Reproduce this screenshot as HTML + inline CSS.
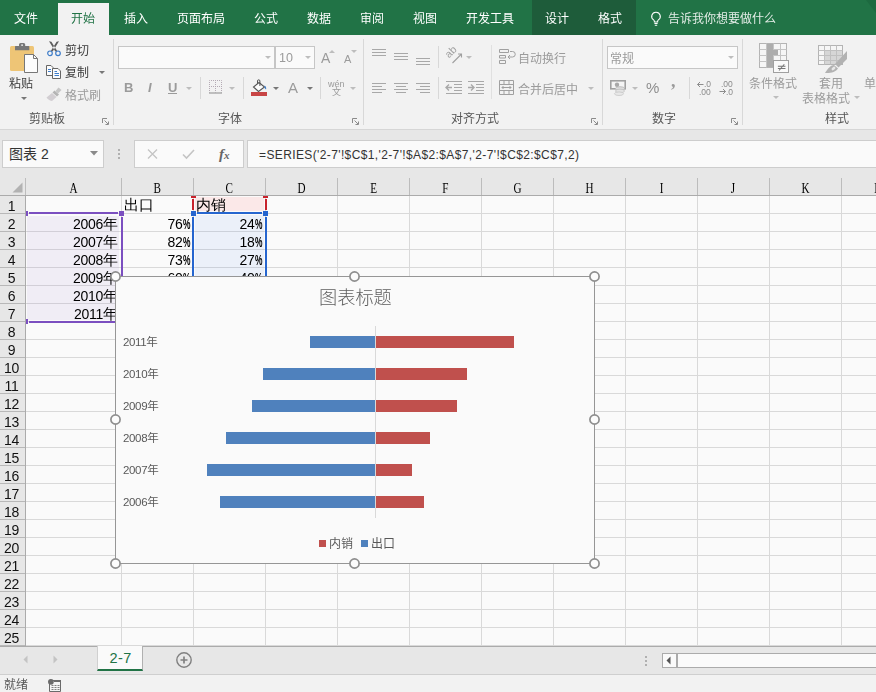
<!DOCTYPE html>
<html lang="zh-CN">
<head>
<meta charset="utf-8">
<title>Excel - 2-7</title>
<style>
*{box-sizing:border-box;margin:0;padding:0}
html,body{width:876px;height:692px;overflow:hidden;background:#fafafa}
body{font-family:"Liberation Sans","Noto Sans CJK SC",sans-serif;font-size:12px;color:#444;position:relative}
.t{position:absolute;white-space:nowrap;line-height:12px;height:12px;font-size:12px;margin-top:1px}
svg{position:absolute;overflow:visible}
#tabs,#ribbon,#grid,#status{will-change:transform}
#tabs{position:absolute;left:0;top:0;width:876px;height:35px;background:#217346}
#tabs .t{color:#fff;top:12px}
#ctx{position:absolute;left:532px;top:0;width:104px;height:35px;background:#1e5c3a}
#home{position:absolute;left:58px;top:3px;width:51px;height:32px;background:#f2f2f2}
#ribbon{position:absolute;left:0;top:35px;width:876px;height:95px;background:#f2f2f2;border-bottom:1px solid #d6d6d6}
#ribbon .t{color:#3c3c3c}
#ribbon .g{color:#9b9b9b}
#ribbon .lbl{color:#555}
.sep{position:absolute;width:1px;background:#d8d8d8}
.box{position:absolute;background:#fafafa;border:1px solid #c6c6c6}
.ar{position:absolute;width:0;height:0;border-left:3px solid transparent;border-right:3px solid transparent;border-top:3px solid #777}
.ar.l{border-top-color:#bdbdbd}
#fbar{position:absolute;left:0;top:130px;width:876px;height:48px;background:#e7e7e7}
#grid{position:absolute;left:0;top:178px;width:876px;height:468px;background:#fafafa;overflow:hidden}
#colh{position:absolute;left:0;top:0;width:876px;height:18px;background:#e7e7e7;border-bottom:1px solid #ababab}
#rowh{position:absolute;left:0;top:18px;width:26px;height:450px;background:#e7e7e7;border-right:1px solid #ababab}
.ch{position:absolute;top:0;height:17px;width:72px;text-align:center;font-family:"Liberation Serif","Noto Serif CJK SC",serif;font-size:15.5px;line-height:20px;color:#000;border-right:1px solid #bcbcbc}
.ch b{display:inline-block;font-weight:normal;transform:scaleX(.72)}
.rh{position:absolute;left:0;width:25px;padding-right:2px;height:18px;font-family:"Liberation Sans",sans-serif;font-size:14px;letter-spacing:-0.28px;line-height:20px;color:#111;text-align:center;border-bottom:1px solid #b8b8b8}
.vl{position:absolute;top:18px;width:1px;height:450px;background:#d9d9d9}
.hl{position:absolute;left:26px;height:1px;width:850px;background:#d9d9d9}
.cell{position:absolute;height:17px;font-family:"Liberation Sans","WenQuanYi Zen Hei",sans-serif;font-size:14px;letter-spacing:-0.28px;line-height:20px;color:#000;white-space:nowrap;overflow:hidden}
.cell u{text-decoration:none;display:inline-block;width:7.5px;transform:scaleX(.6);transform-origin:0 50%;font-weight:bold;font-size:14px;letter-spacing:0}
.cell s{text-decoration:none;font-family:"WenQuanYi Zen Hei","Noto Sans CJK SC",sans-serif;font-size:15px;letter-spacing:0}
.cell.r{text-align:right}
.sc{font-family:"WenQuanYi Zen Hei","Noto Sans CJK SC",sans-serif;line-height:18px;font-size:15px;letter-spacing:0;color:#000}
#chart{position:absolute;left:115px;top:98px;width:480px;height:288px;background:#fafafa;border:1px solid #969696}
#chart .t{color:#595959;margin-top:0;font-size:11.5px}
#chart .c{letter-spacing:-0.35px}
.bar{position:absolute;height:12px}
.bb{background:#4f81bd}
.br{background:#c0504d}
.hd{position:absolute;width:11px;height:11px;border-radius:50%;border:1.6px solid #8e8e8e;background:#fcfcfc}
#sheettabs{position:absolute;left:0;top:646px;width:876px;height:28px;background:#e7e7e7;border-top:1px solid #ababab}
#status{position:absolute;left:0;top:674px;width:876px;height:18px;background:#f2f2f2;border-top:1px solid #cfcfcf}
</style>
</head>
<body>
<div id="tabs"><div id="ctx"></div><div id="home"></div>
<span class="t" style="left:14px">文件</span>
<span class="t" style="left:71px;color:#217346">开始</span>
<span class="t" style="left:124px">插入</span>
<span class="t" style="left:177px">页面布局</span>
<span class="t" style="left:254px">公式</span>
<span class="t" style="left:307px">数据</span>
<span class="t" style="left:360px">审阅</span>
<span class="t" style="left:413px">视图</span>
<span class="t" style="left:466px">开发工具</span>
<span class="t" style="left:545px">设计</span>
<span class="t" style="left:598px">格式</span>
<span class="t" style="left:668px;color:#e4ede7">告诉我你想要做什么</span>
<svg style="left:866px;top:0" width="10" height="14" viewBox="0 0 10 14"><path d="M0 0h10v13z" fill="#1d6a40"/></svg>
<svg style="left:650px;top:10.500px" width="12" height="16" viewBox="0 0 12 16"><path d="M6 1.2a4.2 4.2 0 0 0-2.4 7.7c.5.4.8 1 .8 1.6v.5h3.2v-.5c0-.6.3-1.200.8-1.600A4.200 4.200 0 0 0 6 1.200z" fill="none" stroke="#fff" stroke-width="1.100"/><path d="M4.400 12.500h3.200M4.800 14.200h2.400" stroke="#fff" stroke-width="1.100" fill="none"/></svg>
</div>
<div id="ribbon">
<svg style="left:9px;top:7px" width="30" height="32" viewBox="0 0 30 32"><rect x="1" y="4" width="24" height="25" rx="1.5" fill="#eec576"/><path d="M6 8.2V4.6a.6.6 0 0 1 .6-.6H10V2.600A1.600 1.600 0 0 1 11.600 1h3a1.600 1.600 0 0 1 1.600 1.600V4h3.500a.6.6 0 0 1 .6.6V8.200z" fill="#777"/><rect x="12.200" y="2.300" width="1.800" height="1.700" fill="#d8d8d8"/><path d="M15.500 12.500h9l4 4V30.500h-13z" fill="#fcfcfc" stroke="#777"/><path d="M24.500 12.500v4h4" fill="none" stroke="#777"/></svg>
<span class="t" style="left:9px;top:42px">粘贴</span>
<i class="ar" style="left:21px;top:62px"></i>
<svg style="left:46px;top:6px" width="16" height="16" viewBox="0 0 16 16"><path d="M3 0.300L5.400 0.800 11.200 10 9.300 10.600zM13 0.300L10.600 0.800 4.800 10 6.700 10.600z" fill="#5c5c5c"/><circle cx="4" cy="12.300" r="2.300" fill="none" stroke="#3d7cc9" stroke-width="1.200"/><circle cx="12" cy="12.300" r="2.300" fill="none" stroke="#3d7cc9" stroke-width="1.200"/></svg>
<span class="t" style="left:65px;top:9px">剪切</span>
<svg style="left:46px;top:29px" width="16" height="16" viewBox="0 0 16 16"><path d="M0.500 1.500h4.500l2 2v8h-6.500z" fill="#fcfcfc" stroke="#666"/><path d="M2 5.500h3M2 7.500h3" stroke="#3d7cc9" fill="none"/><path d="M6.500 4.500h5.500l2.500 2.500v7.500h-8z" fill="#fcfcfc" stroke="#666"/><path d="M8.500 9.500h4.500M8.500 11.500h4.500" stroke="#3d7cc9" fill="none"/><path d="M8.500 7.500h2.500" stroke="#3d7cc9" fill="none"/></svg>
<span class="t" style="left:65px;top:31px">复制</span>
<i class="ar" style="left:98.5px;top:36px"></i>
<svg style="left:46px;top:52px" width="16" height="16" viewBox="0 0 16 16"><path d="M12.500 0.500l3 2.500-3.500 3.500-2.500-2.500z" fill="#c6c6c6"/><path d="M8.500 3.500l4.500 4-2 2-4.500-4z" fill="#b4b4b4"/><path d="M6 6l4.500 4L6 14c-1.500 0-4-1.500-5.500-3.500z" fill="#d2ced2"/></svg>
<span class="t g" style="left:65px;top:54px">格式刷</span>
<span class="t lbl" style="left:29px;top:77px">剪贴板</span>
<svg style="left:102px;top:83px" width="7" height="7" viewBox="0 0 7 7"><path d="M0.500 5V0.500H5" fill="none" stroke="#8a8a8a"/><path d="M2.500 2.500L6 6M6.500 3.500V6.500H3.500" fill="none" stroke="#8a8a8a"/></svg>
<i class="sep" style="left:113px;top:4px;height:86px"></i>
<div class="box" style="left:118px;top:11px;width:157px;height:23px"></div>
<div class="box" style="left:275px;top:11px;width:40px;height:23px"></div>
<i class="ar l" style="left:264.5px;top:21px"></i>
<i class="ar l" style="left:304.5px;top:21px"></i>
<span class="t g" style="left:279px;top:16px;font-size:12.5px">10</span>
<span class="t g" style="left:321px;top:15px;font-size:14px;line-height:14px;height:14px">A</span>
<i class="ar l" style="left:329px;top:15px;border-top:none;border-bottom:3px solid #bdbdbd"></i>
<span class="t g" style="left:344px;top:18px;font-size:11px;line-height:11px;height:11px">A</span>
<i class="ar l" style="left:351px;top:15px"></i>
<span class="t g" style="left:124px;top:45px;font-weight:bold;font-size:13px;line-height:13px;height:13px">B</span>
<span class="t g" style="left:148px;top:45px;font-weight:bold;font-style:italic;font-size:13px;line-height:13px;height:13px">I</span>
<span class="t g" style="left:168px;top:45px;font-weight:bold;font-size:13px;line-height:13px;height:13px;border-bottom:1px solid #9b9b9b">U</span>
<i class="ar l" style="left:186px;top:52px"></i>
<i class="sep" style="left:200px;top:42px;height:22px"></i>
<svg style="left:209px;top:45px" width="14" height="14" viewBox="0 0 14 14"><path d="M0.500 0.500h12v12M0.500 0.500v12M6.500 0.500v12M0.500 6.500h12" fill="none" stroke="#b4aab4" stroke-dasharray="1 1" stroke-dashoffset="0.5"/><path d="M0 13h13" stroke="#9b9b9b" stroke-width="1.200"/></svg>
<i class="ar l" style="left:229px;top:52px"></i>
<i class="sep" style="left:243px;top:42px;height:22px"></i>
<svg style="left:251px;top:44px" width="17" height="18" viewBox="0 0 17 18"><path d="M8 3.500L13.500 8 7.500 12.500 2.500 8z" fill="#fcfcfc" stroke="#555" stroke-width="1.100"/><path d="M6.500 5V2a1.200 1.200 0 0 1 2.400 0v5" fill="none" stroke="#555"/><path d="M13.500 6.500c1.500 1 2 2.500 1.500 4l-1.500-1.500z" fill="#3d7cc9"/><rect x="0" y="13" width="16" height="4" fill="#c84545"/></svg>
<i class="ar" style="left:272.5px;top:52px"></i>
<span class="t g" style="left:288px;top:44px;font-size:15px;line-height:15px;height:15px">A</span>
<i class="ar" style="left:306.5px;top:52px"></i>
<i class="sep" style="left:320px;top:42px;height:22px"></i>
<span class="t g" style="left:328px;top:44px;font-size:9px;line-height:9px;height:9px">wén</span>
<span class="t g" style="left:332px;top:52px;font-size:9px;line-height:9px;height:9px">文</span>
<i class="ar l" style="left:349.5px;top:52px"></i>
<span class="t lbl" style="left:218px;top:77px">字体</span>
<svg style="left:352px;top:83px" width="7" height="7" viewBox="0 0 7 7"><path d="M0.500 5V0.500H5" fill="none" stroke="#8a8a8a"/><path d="M2.500 2.500L6 6M6.500 3.500V6.500H3.500" fill="none" stroke="#8a8a8a"/></svg>
<i class="sep" style="left:363px;top:4px;height:86px"></i>
<i class="sep" style="left:372px;top:14px;width:14px;height:1px;background:#a8a8a8"></i><i class="sep" style="left:372px;top:17px;width:14px;height:1px;background:#a8a8a8"></i><i class="sep" style="left:372px;top:20px;width:14px;height:1px;background:#a8a8a8"></i>
<i class="sep" style="left:394px;top:18px;width:14px;height:1px;background:#a8a8a8"></i><i class="sep" style="left:394px;top:21px;width:14px;height:1px;background:#a8a8a8"></i><i class="sep" style="left:394px;top:24px;width:14px;height:1px;background:#a8a8a8"></i>
<i class="sep" style="left:416px;top:23px;width:14px;height:1px;background:#a8a8a8"></i><i class="sep" style="left:416px;top:26px;width:14px;height:1px;background:#a8a8a8"></i><i class="sep" style="left:416px;top:29px;width:14px;height:1px;background:#a8a8a8"></i>
<i class="sep" style="left:372px;top:48px;width:14px;height:1px;background:#a8a8a8"></i><i class="sep" style="left:372px;top:51px;width:10px;height:1px;background:#a8a8a8"></i><i class="sep" style="left:372px;top:54px;width:14px;height:1px;background:#a8a8a8"></i><i class="sep" style="left:372px;top:57px;width:10px;height:1px;background:#a8a8a8"></i>
<i class="sep" style="left:394.0px;top:48px;width:14px;height:1px;background:#a8a8a8"></i><i class="sep" style="left:396.0px;top:51px;width:10px;height:1px;background:#a8a8a8"></i><i class="sep" style="left:394.0px;top:54px;width:14px;height:1px;background:#a8a8a8"></i><i class="sep" style="left:396.0px;top:57px;width:10px;height:1px;background:#a8a8a8"></i>
<i class="sep" style="left:416px;top:48px;width:14px;height:1px;background:#a8a8a8"></i><i class="sep" style="left:420px;top:51px;width:10px;height:1px;background:#a8a8a8"></i><i class="sep" style="left:416px;top:54px;width:14px;height:1px;background:#a8a8a8"></i><i class="sep" style="left:420px;top:57px;width:10px;height:1px;background:#a8a8a8"></i>
<i class="sep" style="left:438px;top:11px;height:22px"></i>
<i class="sep" style="left:438px;top:42px;height:22px"></i>
<svg style="left:446px;top:14px" width="17" height="15" viewBox="0 0 17 15"><text x="0" y="0" font-size="10.5" fill="#a0a0a0" font-family="Liberation Sans,sans-serif" transform="translate(3,9.5) rotate(-45)">ab</text><path d="M6.500 14L15.500 5M12 5h3.500v3.500" fill="none" stroke="#a0a0a0" stroke-width="1.100"/></svg>
<i class="ar l" style="left:465.5px;top:21px"></i>
<svg style="left:446px;top:46px" width="16" height="13" viewBox="0 0 16 13"><path d="M0 0.500h16M8 3.500h8M8 6.500h8M8 9.500h8M0 12.500h16" stroke="#a8a8a8" fill="none"/><path d="M0 6.500h6M3 3.500L0 6.500l3 3" stroke="#a8a8a8" stroke-width="1.400" fill="none"/></svg>
<svg style="left:468px;top:46px" width="16" height="13" viewBox="0 0 16 13"><path d="M0 0.500h16M8 3.500h8M8 6.500h8M8 9.500h8M0 12.500h16" stroke="#a8a8a8" fill="none"/><path d="M0 6.500h6M3 3.500L6 6.500l-3 3" stroke="#a8a8a8" stroke-width="1.400" fill="none"/></svg>
<i class="sep" style="left:491px;top:10px;height:54px;background:#e0e0e0"></i>
<svg style="left:499px;top:14px" width="16" height="15" viewBox="0 0 16 15"><path d="M0.500 0.500h9v3h-9zM0.500 6.500h6v2.500h-6zM0.500 11.500h6v3h-6z" fill="none" stroke="#a0a0a0"/><path d="M11 2.500h2.500a2 2 0 0 1 0 5.500H9M11 6l-2 2 2 2" fill="none" stroke="#a0a0a0"/></svg>
<span class="t g" style="left:518px;top:17px">自动换行</span>
<svg style="left:499px;top:45px" width="15" height="15" viewBox="0 0 15 15"><path d="M0.500 0.500h14v14h-14zM0.500 4.500h14M0.500 10.500h14M5 0.500v4M10 0.500v4M5 10.500v4M10 10.500v4" fill="none" stroke="#a0a0a0"/><path d="M3 7.500h9M4.500 6L3 7.500 4.500 9M10.500 6L12 7.500 10.500 9" fill="none" stroke="#a0a0a0"/></svg>
<span class="t g" style="left:518px;top:48px">合并后居中</span>
<i class="ar l" style="left:587.5px;top:52px"></i>
<span class="t lbl" style="left:451px;top:77px">对齐方式</span>
<svg style="left:591px;top:83px" width="7" height="7" viewBox="0 0 7 7"><path d="M0.500 5V0.500H5" fill="none" stroke="#8a8a8a"/><path d="M2.500 2.500L6 6M6.500 3.500V6.500H3.500" fill="none" stroke="#8a8a8a"/></svg>
<i class="sep" style="left:602px;top:4px;height:86px"></i>
<div class="box" style="left:607px;top:11px;width:131px;height:23px"></div>
<span class="t g" style="left:610px;top:17px">常规</span>
<i class="ar l" style="left:727.5px;top:21px"></i>
<svg style="left:610px;top:45px" width="16" height="16" viewBox="0 0 16 16"><rect x="0.800" y="0.800" width="14.400" height="8" fill="#f4f4f4" stroke="#a0a0a0" stroke-width="1.600"/><circle cx="7" cy="4.800" r="2.200" fill="#a8a8a8"/><ellipse cx="10" cy="8.500" rx="4.500" ry="1.800" fill="#dcdcdc" stroke="#b4b4b4" stroke-width=".8"/><ellipse cx="10" cy="11" rx="4.500" ry="1.800" fill="#e4e4e4" stroke="#c0c0c0" stroke-width=".8"/><ellipse cx="9" cy="13.700" rx="4.500" ry="1.800" fill="#e8e8e8" stroke="#c8c8c8" stroke-width=".8"/></svg>
<i class="ar l" style="left:631.5px;top:52px"></i>
<span class="t g" style="left:646px;top:44px;font-size:15px;line-height:15px;height:15px;color:#8e8e8e">%</span>
<span class="t g" style="left:671px;top:36px;font-size:18px;line-height:18px;height:18px;font-weight:bold;font-family:'Liberation Serif',serif">,</span>
<i class="sep" style="left:689px;top:42px;height:22px"></i>
<svg style="left:697px;top:46px" width="15" height="14" viewBox="0 0 15 14"><text x="7" y="6" font-size="8.5" fill="#8a8a8a" font-family="Liberation Sans,sans-serif">.0</text><text x="2" y="13.5" font-size="8.5" fill="#8a8a8a" font-family="Liberation Sans,sans-serif">.00</text><path d="M0.500 3.500h6M3 1L0.500 3.500 3 6" fill="none" stroke="#8c8c8c"/></svg>
<svg style="left:719px;top:46px" width="15" height="14" viewBox="0 0 15 14"><text x="2" y="6" font-size="8.5" fill="#8a8a8a" font-family="Liberation Sans,sans-serif">.00</text><text x="7" y="13.5" font-size="8.5" fill="#8a8a8a" font-family="Liberation Sans,sans-serif">.0</text><path d="M0.500 10.500h6M4 8l2.500 2.500L4 13" fill="none" stroke="#8c8c8c"/></svg>
<span class="t lbl" style="left:652px;top:77px">数字</span>
<svg style="left:731px;top:83px" width="7" height="7" viewBox="0 0 7 7"><path d="M0.500 5V0.500H5" fill="none" stroke="#8a8a8a"/><path d="M2.500 2.500L6 6M6.500 3.500V6.500H3.500" fill="none" stroke="#8a8a8a"/></svg>
<i class="sep" style="left:742px;top:4px;height:86px"></i>
<svg style="left:759px;top:8px" width="31" height="30" viewBox="0 0 31 30"><rect x="0.500" y="0.500" width="27" height="24" fill="#f6f6f6" stroke="#b4b4b4"/><path d="M0.500 6.500h27M0.500 12.500h27M0.500 18.500h27M7.500 0.500v24M14.500 0.500v24M21.500 0.500v24" stroke="#c4c4c4" fill="none"/><rect x="8" y="1" width="6" height="23" fill="#adadad"/><rect x="14" y="7" width="5" height="5" fill="#adadad"/><rect x="14.500" y="17.500" width="15" height="12" fill="#fafafa" stroke="#a0a0a0"/><text x="17.5" y="28" font-size="12" fill="#777" font-family="DejaVu Sans,sans-serif">≠</text></svg>
<span class="t g" style="left:749px;top:42px">条件格式</span>
<i class="ar l" style="left:772.5px;top:61px"></i>
<svg style="left:818px;top:10px" width="30" height="28" viewBox="0 0 30 28"><rect x="0.500" y="0.500" width="24" height="19" fill="#f6f6f6" stroke="#b4b4b4"/><rect x="7" y="6" width="17" height="13" fill="#d6d6d6"/><path d="M0.500 5.500h24M0.500 10.500h24M0.500 15.500h24M6.500 0.500v19M12.500 0.500v19M18.500 0.500v19" stroke="#c0c0c0" fill="none"/><path d="M29 6v8l-8.500 8.500-3.500-3.500z" fill="#b2b2b2"/><path d="M16 20c-3 0-6 3-9 8 5 .5 11-1 13-4.500z" fill="#b2b2b2"/><ellipse cx="15.500" cy="23.500" rx="2.200" ry="1.400" fill="#e8e8e8" transform="rotate(-40 15.500 23.500)"/></svg>
<span class="t g" style="left:819px;top:42px">套用</span>
<span class="t g" style="left:802px;top:57px">表格格式</span>
<i class="ar l" style="left:853.5px;top:61px"></i>
<span class="t g" style="left:864px;top:42px">单</span>
<span class="t lbl" style="left:825px;top:77px">样式</span>
</div>
<div id="fbar">
<div class="box" style="left:2px;top:10px;width:102px;height:28px;border-color:#cdcdcd"></div>
<span class="t" style="left:9px;top:16px;font-size:14px;line-height:14px;height:14px;color:#333">图表 2</span>
<svg style="left:89.500px;top:21px" width="8" height="5" viewBox="0 0 8 5"><path d="M0 0h8L4 4.500z" fill="#8a8a8a"/></svg>
<i class="sep" style="left:118px;top:19px;width:2px;height:2px;background:#b0b0b0"></i>
<i class="sep" style="left:118px;top:23px;width:2px;height:2px;background:#b0b0b0"></i>
<i class="sep" style="left:118px;top:27px;width:2px;height:2px;background:#b0b0b0"></i>
<div class="box" style="left:134px;top:10px;width:110px;height:28px;border-color:#cdcdcd"></div>
<svg style="left:147px;top:19px" width="11" height="10" viewBox="0 0 11 10"><path d="M1 0.500l9 9M10 0.500l-9 9" stroke="#c4c4c4" stroke-width="1.300" fill="none"/></svg>
<svg style="left:182px;top:19px" width="13" height="10" viewBox="0 0 13 10"><path d="M1 5.500l3.500 3.500L12 1" stroke="#c4c4c4" stroke-width="1.600" fill="none"/></svg>
<span class="t" style="left:219px;top:16px;font-family:'Liberation Serif',serif;font-style:italic;font-weight:bold;font-size:15px;line-height:15px;height:15px;color:#666"><i>f</i><span style="font-size:11px;margin-left:0px">x</span></span>
<div class="box" style="left:247px;top:10px;width:640px;height:28px;border-color:#cdcdcd"></div>
<span class="t" style="left:259px;top:18px;color:#333;font-size:12px;letter-spacing:0.38px">=SERIES('2-7'!$C$1,'2-7'!$A$2:$A$7,'2-7'!$C$2:$C$7,2)</span>
</div>
<div id="grid">
<i class="vl" style="left:121px"></i>
<i class="vl" style="left:193px"></i>
<i class="vl" style="left:265px"></i>
<i class="vl" style="left:337px"></i>
<i class="vl" style="left:409px"></i>
<i class="vl" style="left:481px"></i>
<i class="vl" style="left:553px"></i>
<i class="vl" style="left:625px"></i>
<i class="vl" style="left:697px"></i>
<i class="vl" style="left:769px"></i>
<i class="vl" style="left:841px"></i>
<i class="vl" style="left:913px"></i>
<i class="hl" style="top:35px"></i>
<i class="hl" style="top:53px"></i>
<i class="hl" style="top:71px"></i>
<i class="hl" style="top:89px"></i>
<i class="hl" style="top:107px"></i>
<i class="hl" style="top:125px"></i>
<i class="hl" style="top:143px"></i>
<i class="hl" style="top:161px"></i>
<i class="hl" style="top:179px"></i>
<i class="hl" style="top:197px"></i>
<i class="hl" style="top:215px"></i>
<i class="hl" style="top:233px"></i>
<i class="hl" style="top:251px"></i>
<i class="hl" style="top:269px"></i>
<i class="hl" style="top:287px"></i>
<i class="hl" style="top:305px"></i>
<i class="hl" style="top:323px"></i>
<i class="hl" style="top:341px"></i>
<i class="hl" style="top:359px"></i>
<i class="hl" style="top:377px"></i>
<i class="hl" style="top:395px"></i>
<i class="hl" style="top:413px"></i>
<i class="hl" style="top:431px"></i>
<i class="hl" style="top:449px"></i>
<i class="hl" style="top:467px"></i>
<div style="position:absolute;left:27px;top:38px;width:92px;height:104px;background:rgba(128,88,192,0.08)"></div>
<div style="position:absolute;left:195px;top:19px;width:69px;height:14px;background:#fbe8e8"></div>
<div style="position:absolute;left:195px;top:37px;width:69px;height:107px;background:rgba(50,115,235,0.075)"></div>
<div id="colh">
<svg style="left:12px;top:4px" width="11" height="11" viewBox="0 0 11 11"><path d="M10.500 0.500v10h-10z" fill="#b2b2b2"/></svg>
<i class="sep" style="left:25px;top:0;height:17px;background:#bdbdbd"></i>
<div class="ch" style="left:26px;width:96px"><b>A</b></div>
<div class="ch" style="left:122px;width:72px"><b>B</b></div>
<div class="ch" style="left:194px;width:72px"><b>C</b></div>
<div class="ch" style="left:266px;width:72px"><b>D</b></div>
<div class="ch" style="left:338px;width:72px"><b>E</b></div>
<div class="ch" style="left:410px;width:72px"><b>F</b></div>
<div class="ch" style="left:482px;width:72px"><b>G</b></div>
<div class="ch" style="left:554px;width:72px"><b>H</b></div>
<div class="ch" style="left:626px;width:72px"><b>I</b></div>
<div class="ch" style="left:698px;width:72px"><b>J</b></div>
<div class="ch" style="left:770px;width:72px"><b>K</b></div>
<div class="ch" style="left:842px;width:72px"><b>L</b></div>
</div>
<div id="rowh">
<div class="rh" style="top:0px">1</div>
<div class="rh" style="top:18px">2</div>
<div class="rh" style="top:36px">3</div>
<div class="rh" style="top:54px">4</div>
<div class="rh" style="top:72px">5</div>
<div class="rh" style="top:90px">6</div>
<div class="rh" style="top:108px">7</div>
<div class="rh" style="top:126px">8</div>
<div class="rh" style="top:144px">9</div>
<div class="rh" style="top:162px">10</div>
<div class="rh" style="top:180px">11</div>
<div class="rh" style="top:198px">12</div>
<div class="rh" style="top:216px">13</div>
<div class="rh" style="top:234px">14</div>
<div class="rh" style="top:252px">15</div>
<div class="rh" style="top:270px">16</div>
<div class="rh" style="top:288px">17</div>
<div class="rh" style="top:306px">18</div>
<div class="rh" style="top:324px">19</div>
<div class="rh" style="top:342px">20</div>
<div class="rh" style="top:360px">21</div>
<div class="rh" style="top:378px">22</div>
<div class="rh" style="top:396px">23</div>
<div class="rh" style="top:414px">24</div>
<div class="rh" style="top:432px">25</div>
</div>
<div class="cell sc" style="left:122px;top:18px;width:71px;padding-left:2px">出口</div>
<div class="cell sc" style="left:194px;top:18px;width:71px;padding-left:2px">内销</div>
<div class="cell r" style="left:26px;top:36px;width:95px;padding-right:3px">2006<s>年</s></div>
<div class="cell r" style="left:122px;top:36px;width:71px;padding-right:3px">76<u>%</u></div>
<div class="cell r" style="left:194px;top:36px;width:71px;padding-right:3px">24<u>%</u></div>
<div class="cell r" style="left:26px;top:54px;width:95px;padding-right:3px">2007<s>年</s></div>
<div class="cell r" style="left:122px;top:54px;width:71px;padding-right:3px">82<u>%</u></div>
<div class="cell r" style="left:194px;top:54px;width:71px;padding-right:3px">18<u>%</u></div>
<div class="cell r" style="left:26px;top:72px;width:95px;padding-right:3px">2008<s>年</s></div>
<div class="cell r" style="left:122px;top:72px;width:71px;padding-right:3px">73<u>%</u></div>
<div class="cell r" style="left:194px;top:72px;width:71px;padding-right:3px">27<u>%</u></div>
<div class="cell r" style="left:26px;top:90px;width:95px;padding-right:3px">2009<s>年</s></div>
<div class="cell r" style="left:122px;top:90px;width:71px;padding-right:3px">60<u>%</u></div>
<div class="cell r" style="left:194px;top:90px;width:71px;padding-right:3px">40<u>%</u></div>
<div class="cell r" style="left:26px;top:108px;width:95px;padding-right:3px">2010<s>年</s></div>
<div class="cell r" style="left:122px;top:108px;width:71px;padding-right:3px">55<u>%</u></div>
<div class="cell r" style="left:194px;top:108px;width:71px;padding-right:3px">45<u>%</u></div>
<div class="cell r" style="left:26px;top:126px;width:95px;padding-right:3px">2011<s>年</s></div>
<div class="cell r" style="left:122px;top:126px;width:71px;padding-right:3px">32<u>%</u></div>
<div class="cell r" style="left:194px;top:126px;width:71px;padding-right:3px">68<u>%</u></div>
<i class="sep" style="left:29px;top:34px;width:89px;height:2px;background:#7b4fc0"></i>
<i class="sep" style="left:26px;top:33px;width:2px;height:5px;background:#7b4fc0"></i>
<i class="sep" style="left:119px;top:33px;width:5px;height:5px;background:#7b4fc0"></i>
<i class="sep" style="left:121px;top:39px;width:2px;height:102px;background:#7b4fc0"></i>
<i class="sep" style="left:29px;top:143px;width:89px;height:2px;background:#7b4fc0"></i>
<i class="sep" style="left:26px;top:141px;width:2px;height:5px;background:#7b4fc0"></i>
<i class="sep" style="left:191px;top:18px;width:5px;height:2px;background:#c8222c"></i>
<i class="sep" style="left:263px;top:18px;width:5px;height:2px;background:#c8222c"></i>
<i class="sep" style="left:192px;top:21px;width:2px;height:11px;background:#c8222c"></i>
<i class="sep" style="left:265px;top:21px;width:2px;height:11px;background:#c8222c"></i>
<i class="sep" style="left:191px;top:33px;width:5px;height:5px;background:#2565cf"></i>
<i class="sep" style="left:263px;top:33px;width:5px;height:5px;background:#2565cf"></i>
<i class="sep" style="left:197px;top:34px;width:65px;height:2px;background:#2565cf"></i>
<i class="sep" style="left:192px;top:39px;width:2px;height:113px;background:#2565cf"></i>
<i class="sep" style="left:265px;top:39px;width:2px;height:113px;background:#2565cf"></i>
<div id="chart">
<span class="t" style="left:203px;top:12px;font-size:18.2px;line-height:19px;height:19px;color:#5e5e5e;font-weight:300">图表标题</span>
<i class="sep" style="left:259px;top:49px;height:192px;background:#d9d9d9"></i>
<span class="t c" style="left:7px;top:59px">2011<span style="letter-spacing:0">年</span></span>
<i class="bar bb" style="left:194px;top:59px;width:65px"></i>
<i class="bar br" style="left:260px;top:59px;width:138px"></i>
<span class="t c" style="left:7px;top:91px">2010<span style="letter-spacing:0">年</span></span>
<i class="bar bb" style="left:147px;top:91px;width:112px"></i>
<i class="bar br" style="left:260px;top:91px;width:91px"></i>
<span class="t c" style="left:7px;top:123px">2009<span style="letter-spacing:0">年</span></span>
<i class="bar bb" style="left:136px;top:123px;width:123px"></i>
<i class="bar br" style="left:260px;top:123px;width:81px"></i>
<span class="t c" style="left:7px;top:155px">2008<span style="letter-spacing:0">年</span></span>
<i class="bar bb" style="left:110px;top:155px;width:149px"></i>
<i class="bar br" style="left:260px;top:155px;width:54px"></i>
<span class="t c" style="left:7px;top:187px">2007<span style="letter-spacing:0">年</span></span>
<i class="bar bb" style="left:91px;top:187px;width:168px"></i>
<i class="bar br" style="left:260px;top:187px;width:36px"></i>
<span class="t c" style="left:7px;top:219px">2006<span style="letter-spacing:0">年</span></span>
<i class="bar bb" style="left:104px;top:219px;width:155px"></i>
<i class="bar br" style="left:260px;top:219px;width:48px"></i>
<i class="bar br" style="left:203px;top:263px;width:7px;height:7px"></i>
<span class="t" style="left:213px;top:261px;font-size:12px">内销</span>
<i class="bar bb" style="left:245px;top:263px;width:7px;height:7px"></i>
<span class="t" style="left:255px;top:261px;font-size:12px">出口</span>
</div>
<svg style="left:110px;top:93px" width="11" height="11" viewBox="0 0 11 11"><circle cx="5.5" cy="5.5" r="4.600" fill="#fcfcfc" stroke="#8e8e8e" stroke-width="1.700"/></svg>
<svg style="left:349px;top:93px" width="11" height="11" viewBox="0 0 11 11"><circle cx="5.5" cy="5.5" r="4.600" fill="#fcfcfc" stroke="#8e8e8e" stroke-width="1.700"/></svg>
<svg style="left:589px;top:93px" width="11" height="11" viewBox="0 0 11 11"><circle cx="5.5" cy="5.5" r="4.600" fill="#fcfcfc" stroke="#8e8e8e" stroke-width="1.700"/></svg>
<svg style="left:110px;top:236px" width="11" height="11" viewBox="0 0 11 11"><circle cx="5.5" cy="5.5" r="4.600" fill="#fcfcfc" stroke="#8e8e8e" stroke-width="1.700"/></svg>
<svg style="left:589px;top:236px" width="11" height="11" viewBox="0 0 11 11"><circle cx="5.5" cy="5.5" r="4.600" fill="#fcfcfc" stroke="#8e8e8e" stroke-width="1.700"/></svg>
<svg style="left:110px;top:380px" width="11" height="11" viewBox="0 0 11 11"><circle cx="5.5" cy="5.5" r="4.600" fill="#fcfcfc" stroke="#8e8e8e" stroke-width="1.700"/></svg>
<svg style="left:349px;top:380px" width="11" height="11" viewBox="0 0 11 11"><circle cx="5.5" cy="5.5" r="4.600" fill="#fcfcfc" stroke="#8e8e8e" stroke-width="1.700"/></svg>
<svg style="left:589px;top:380px" width="11" height="11" viewBox="0 0 11 11"><circle cx="5.5" cy="5.5" r="4.600" fill="#fcfcfc" stroke="#8e8e8e" stroke-width="1.700"/></svg>
</div>
<div id="sheettabs">
<svg style="left:23px;top:8px" width="5" height="9" viewBox="0 0 5 9"><path d="M4.500 0.500v8l-4-4z" fill="#c4c4c4"/></svg>
<svg style="left:52.5px;top:8px" width="5" height="9" viewBox="0 0 5 9"><path d="M0.500 0.500v8l4-4z" fill="#c4c4c4"/></svg>
<div style="position:absolute;left:97px;top:-1px;width:46px;height:25px;background:#fafafa;border-left:1px solid #d0d0d0;border-right:1px solid #b0b0b0;border-bottom:2px solid #217346"></div>
<span class="t" style="left:109.5px;top:3px;color:#217346;font-size:14.5px;line-height:15px;height:15px;letter-spacing:0.4px">2-7</span>
<svg style="left:176px;top:5px" width="16" height="16" viewBox="0 0 16 16"><circle cx="8" cy="8" r="7.2" fill="none" stroke="#808080" stroke-width="1.4"/><path d="M4.5 8h7M8 4.5v7" stroke="#808080" stroke-width="1.7"/></svg>
<i class="sep" style="left:645px;top:9px;width:2px;height:2px;background:#b0b0b0"></i>
<i class="sep" style="left:645px;top:13px;width:2px;height:2px;background:#b0b0b0"></i>
<i class="sep" style="left:645px;top:17px;width:2px;height:2px;background:#b0b0b0"></i>
<div class="box" style="left:662px;top:6px;width:15px;height:15px;border-color:#ababab"></div>
<svg style="left:666px;top:9px" width="5" height="9" viewBox="0 0 5 9"><path d="M4.5 0.5v8l-4-4z" fill="#555"/></svg>
<div class="box" style="left:677px;top:6px;width:210px;height:15px;border-color:#ababab"></div>
</div>
<div id="status">
<span class="t" style="left:4px;top:3px;color:#555">就绪</span>
<svg style="left:48px;top:3px" width="13" height="14" viewBox="0 0 13 14"><path d="M1.500 2.500h11v11h-11z" fill="#f4f4f4" stroke="#6a6a6a"/><path d="M6 3h7" stroke="#6a6a6a" stroke-width="2" fill="none"/><path d="M3.500 7.500h8M3.500 9.500h8M3.500 11.500h8" stroke="#808080" stroke-dasharray="2 1" fill="none"/><circle cx="2.900" cy="3.800" r="2.900" fill="#6a6a6a"/></svg>
</div>
</body>
</html>
